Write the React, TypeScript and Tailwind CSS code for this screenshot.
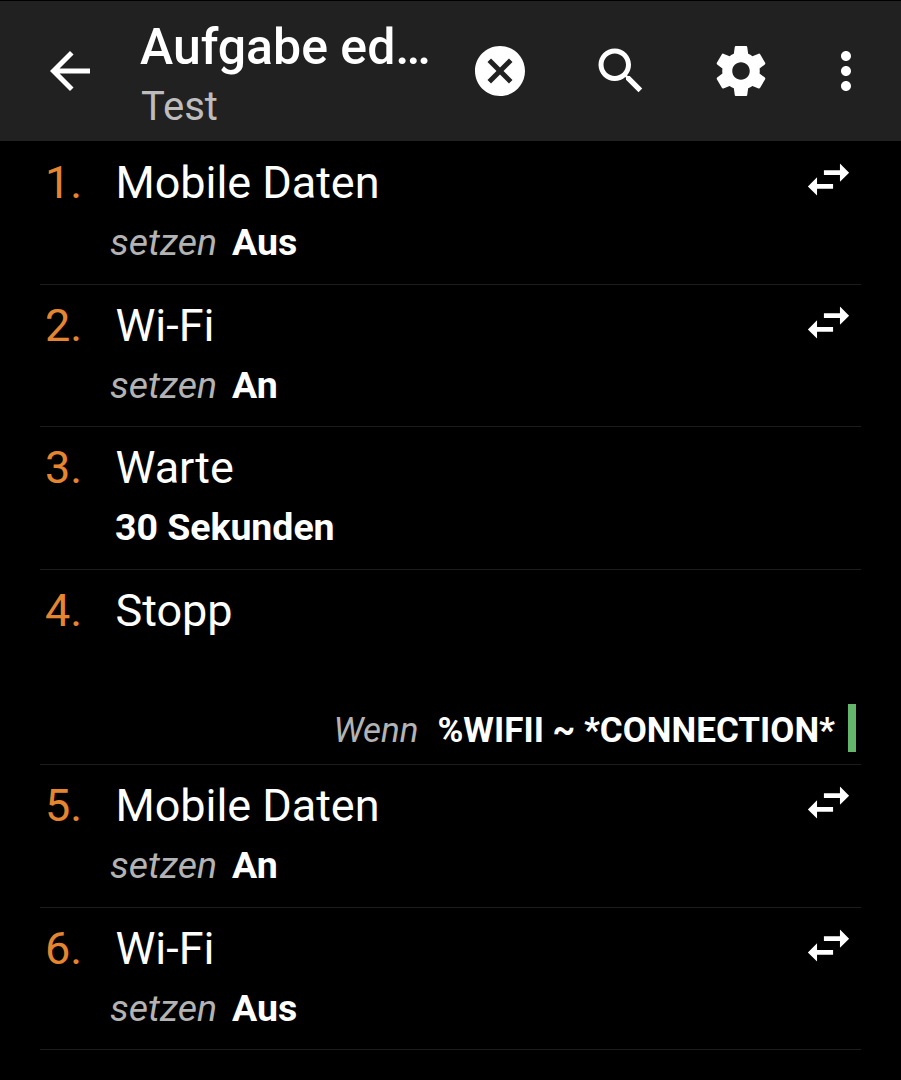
interface Action {
  name: string;
  verb?: string;
  value?: string;
  swap?: boolean;
  condition?: string;
}

const ACTIONS: Action[] = [
  { name: "Mobile Daten", verb: "setzen", value: "Aus", swap: true },
  { name: "Wi-Fi", verb: "setzen", value: "An", swap: true },
  { name: "Warte", value: "30 Sekunden" },
  { name: "Stopp", condition: "%WIFII ~ *CONNECTION*" },
  { name: "Mobile Daten", verb: "setzen", value: "An", swap: true },
  { name: "Wi-Fi", verb: "setzen", value: "Aus", swap: true },
];

const ICONS = {
  back: "M20 11H7.83l5.59-5.59L12 4l-8 8 8 8 1.41-1.41L7.83 13H20v-2z",
  cancel:
    "M12 2C6.47 2 2 6.47 2 12s4.47 10 10 10 10-4.47 10-10S17.53 2 12 2zm5 13.59L15.59 17 12 13.41 8.41 17 7 15.59 10.59 12 7 8.41 8.41 7 12 10.59 15.59 7 17 8.41 13.41 12 17 15.59z",
  search:
    "M15.5 14h-.79l-.28-.27C15.41 12.59 16 11.11 16 9.5 16 5.91 13.09 3 9.5 3S3 5.91 3 9.5 5.91 16 9.5 16c1.61 0 3.09-.59 4.23-1.57l.27.28v.79l5 4.99L20.49 19l-4.99-5zm-6 0C7.01 14 5 11.99 5 9.5S7.01 5 9.5 5 14 7.01 14 9.5 11.99 14 9.5 14z",
  settings:
    "M19.43 12.98c.04-.32.07-.64.07-.98s-.03-.66-.07-.98l2.11-1.65c.19-.15.24-.42.12-.64l-2-3.46c-.12-.22-.39-.3-.61-.22l-2.49 1c-.52-.4-1.08-.73-1.69-.98l-.38-2.65C14.46 2.18 14.25 2 14 2h-4c-.25 0-.46.18-.49.42l-.38 2.65c-.61.25-1.17.59-1.69.98l-2.49-1c-.23-.09-.49 0-.61.22l-2 3.46c-.13.22-.07.49.12.64l2.11 1.65c-.04.32-.07.65-.07.98s.03.66.07.98l-2.11 1.65c-.19.15-.24.42-.12.64l2 3.46c.12.22.39.3.61.22l2.49-1c.52.4 1.08.73 1.69.98l.38 2.65c.03.24.24.42.49.42h4c.25 0 .46-.18.49-.42l.38-2.65c.61-.25 1.17-.59 1.69-.98l2.49 1c.23.09.49 0 .61-.22l2-3.46c.12-.22.07-.49-.12-.64l-2.11-1.65zM12 15.5c-1.93 0-3.5-1.57-3.5-3.5s1.57-3.5 3.5-3.5 3.5 1.57 3.5 3.5-1.57 3.5-3.5 3.5z",
  more: "M12 8c1.1 0 2-.9 2-2s-.9-2-2-2-2 .9-2 2 .9 2 2 2zm0 2c-1.1 0-2 .9-2 2s.9 2 2 2 2-.9 2-2-.9-2-2-2zm0 6c-1.1 0-2 .9-2 2s.9 2 2 2 2-.9 2-2-.9-2-2-2z",
  swap: "M21 9l-4-4v3h-7v2h7v3M7 11l-4 4 4 4v-3h7v-2H7v-3z",
};

const Icon = ({ path, className }: { path: string; className: string }) => (
  <svg viewBox="0 0 24 24" fill="currentColor" className={className} aria-hidden="true">
    <path d={path} />
  </svg>
);

const IconButton = ({
  label,
  path,
  className = "",
}: {
  label: string;
  path: string;
  className?: string;
}) => (
  <button type="button" aria-label={label} className={`shrink-0 ${className}`}>
    <Icon path={path} className="size-[60px]" />
  </button>
);

const Toolbar = () => (
  <header className="flex h-[141px] items-center border-t border-black bg-[#212121] pl-10">
    <IconButton label="Zurück" path={ICONS.back} />
    <div className="ml-10 w-[300px] pt-3">
      <h1 className="h-[60px] truncate text-[50px] leading-[60px] font-medium">
        Aufgabe ed…
      </h1>
      <p className="h-[60px] pl-px text-[40px] leading-[60px] text-[#bdbdbd]">Test</p>
    </div>
    <IconButton label="Abbrechen" path={ICONS.cancel} className="ml-[30px]" />
    <IconButton label="Suchen" path={ICONS.search} className="ml-[61px]" />
    <IconButton label="Einstellungen" path={ICONS.settings} className="ml-[60px]" />
    <IconButton label="Mehr" path={ICONS.more} className="ml-[45px]" />
  </header>
);

const ActionRow = ({ action, index }: { action: Action; index: number }) => (
  <li
    className={`flex flex-col border-b border-[#1c1c1c] ${
      action.condition ? "h-[195.3px]" : "h-[142.6px]"
    }`}
  >
    <div className="flex h-[67px] pt-[14px]">
      <span className="w-[75px] shrink-0 pl-[5px] text-[45px] leading-[53px] text-[#e6852f]">
        {index + 1}.
      </span>
      <span className="flex-1 pl-[0.5px] text-[45px] leading-[53px] tracking-[-0.05px]">
        {action.name}
      </span>
      {action.swap ? (
        <Icon path={ICONS.swap} className="-mt-1 mr-[5px] size-[55px]" />
      ) : null}
    </div>

    {action.value ? (
      <p
        className={`mt-[11px] flex gap-[15px] text-[37.5px] leading-[44px] ${
          action.verb ? "pl-[70px]" : "pl-[75px]"
        }`}
      >
        {action.verb ? <i className="text-[#b3b3b3]">{action.verb}</i> : null}
        <b className="tracking-[-0.05px]">{action.value}</b>
      </p>
    ) : null}

    {action.condition ? (
      <p className="mt-auto mr-[5px] mb-3 flex h-12 items-end justify-end text-[35px] leading-[42px]">
        <i className="mr-[19px] text-[#b3b3b3]">Wenn</i>
        <b className="mr-[13px]">{action.condition}</b>
        <span className="h-12 w-2 bg-[#66b56d]" />
      </p>
    ) : null}
  </li>
);

export default function App() {
  return (
    <div className="h-[1080px] overflow-hidden bg-black font-['Roboto',sans-serif] text-white">
      <Toolbar />
      <ul className="mx-10 pt-px">
        {ACTIONS.map((action, index) => (
          <ActionRow key={index} action={action} index={index} />
        ))}
      </ul>
    </div>
  );
}
